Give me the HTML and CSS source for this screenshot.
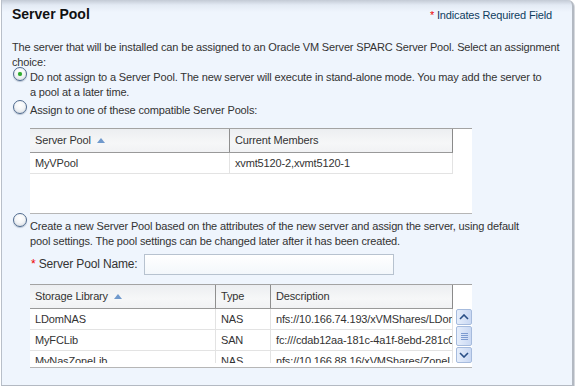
FILE: index.html
```html
<!DOCTYPE html>
<html>

<head>
    <meta name="viewport" content="width=device-width, initial-scale=1.0">
    <title>Server Pool</title>
    <link rel="stylesheet" href="styles.css">
</head>

<body>
    <div class="panel">
        <div class="panel-header">
            <div class="panel-title">Server Pool</div>
            <div class="required-note"><span class="req">*</span> Indicates Required Field</div>
        </div>

        <p class="intro">The server that will be installed can be assigned to an Oracle VM Server SPARC Server Pool. Select an assignment choice:</p>

        <div class="option option-first">
            <span class="radio checked"></span>
            <div class="option-body">Do not assign to a Server Pool. The new server will execute in stand-alone mode. You may add the server to a pool at a later time.</div>
        </div>

        <div class="option option-second">
            <span class="radio"></span>
            <div class="option-body">
                Assign to one of these compatible Server Pools:
                <div class="grid grid-pools">
                    <div class="grid-head">
                        <div class="cell col-pool">Server Pool <span class="sort"></span></div>
                        <div class="cell col-members">Current Members</div>
                    </div>
                    <div class="grid-rows">
                        <div class="grid-row">
                            <div class="cell col-pool">MyVPool</div>
                            <div class="cell col-members">xvmt5120-2,xvmt5120-1</div>
                        </div>
                    </div>
                </div>
            </div>
        </div>

        <div class="option option-third">
            <span class="radio"></span>
            <div class="option-body">
                <div class="option-text">Create a new Server Pool based on the attributes of the new server and assign the server, using default pool settings. The pool settings can be changed later after it has been created.</div>
                <div class="name-row">
                    <label class="name-label"><span class="req">*</span> Server Pool Name:</label>
                    <input type="text" class="name-input">
                </div>
                <div class="grid grid-libs">
                    <div class="grid-head">
                        <div class="cell col-lib">Storage Library <span class="sort"></span></div>
                        <div class="cell col-type">Type</div>
                        <div class="cell col-desc">Description</div>
                    </div>
                    <div class="grid-scroll">
                        <div class="grid-rows">
                            <div class="grid-row">
                                <div class="cell col-lib">LDomNAS</div>
                                <div class="cell col-type">NAS</div>
                                <div class="cell col-desc">nfs://10.166.74.193/xVMShares/LDomNAS</div>
                            </div>
                            <div class="grid-row">
                                <div class="cell col-lib">MyFCLib</div>
                                <div class="cell col-type">SAN</div>
                                <div class="cell col-desc">fc:///cdab12aa-181c-4a1f-8ebd-281c0e2f</div>
                            </div>
                            <div class="grid-row">
                                <div class="cell col-lib">MyNasZoneLib</div>
                                <div class="cell col-type">NAS</div>
                                <div class="cell col-desc">nfs://10.166.88.16/xVMShares/ZoneLib</div>
                            </div>
                        </div>
                        <div class="scrollbar">
                            <div class="sb-btn">
                                <svg width="10" height="6" viewBox="0 0 10 6"><path d="M1 5 L5 1 L9 5" fill="none" stroke="#2a4f86" stroke-width="1.6"/></svg>
                            </div>
                            <div class="sb-thumb">
                                <span></span><span></span><span></span><span></span>
                            </div>
                            <div class="sb-btn">
                                <svg width="10" height="6" viewBox="0 0 10 6"><path d="M1 1 L5 5 L9 1" fill="none" stroke="#2a4f86" stroke-width="1.6"/></svg>
                            </div>
                        </div>
                    </div>
                </div>
            </div>
        </div>
    </div>
</body>

</html>
```

FILE: styles.css
```css
:root {
    --panel-bg: #eff5fd;
    --text-color: #333;
    --grid-line: #a3a3a3;
    --row-line: #e3e3e3;
}

body {
    margin: 0;
    background-color: #fff;
    font-family: "Liberation Sans", Arial, sans-serif;
    font-size: 11px;
    letter-spacing: -0.15px;
    color: var(--text-color);
}

.panel {
    box-sizing: border-box;
    width: 573px;
    height: 386px;
    margin-left: 1px;
    padding: 0 12px 0 10px;
    background: linear-gradient(#c3cad5 0, #e3eaf4 5px, var(--panel-bg) 12px);
    border-left: 1px solid #b8bfc9;
    border-right: 2px solid #b3b9c2;
    border-bottom: 1px solid #b3b9c2;
    border-top-right-radius: 6px;
    box-shadow: 1px 1px 0 #d6d9de;
}

.panel-header {
    display: flex;
    justify-content: space-between;
    align-items: baseline;
    padding-top: 6px;
}

.panel-title {
    font-size: 14px;
    font-weight: bold;
    line-height: 17px;
    letter-spacing: 0;
    color: #111;
}

.required-note {
    font-size: 11px;
    color: #0f3d5f;
    padding-right: 8px;
}

.req {
    color: #e00;
}

.intro {
    margin: 17px 0 0 0;
    line-height: 15px;
}

.option {
    display: flex;
    line-height: 15px;
}

.option-second {
    margin-top: 3px;
}

.option-third {
    margin-top: 5px;
}

.option-body {
    flex: 1;
    padding-right: 14px;
}

.option-text {
    padding-right: 10px;
}

.radio {
    flex: none;
    box-sizing: border-box;
    width: 14px;
    height: 14px;
    margin: -3px 3px 0 1px;
    border: 1px solid #4f6a8e;
    border-radius: 50%;
    background: radial-gradient(circle at 50% 35%, #fff 0, #f4f6f8 45%, #cfd5dc 100%);
    box-shadow: 0 1px 1px rgba(80, 100, 130, 0.35);
    position: relative;
}

.option-third .radio {
    margin-top: -6px;
}

.radio.checked:after {
    content: "";
    position: absolute;
    left: 4px;
    top: 4px;
    width: 4px;
    height: 4px;
    border-radius: 50%;
    background-color: #2faa2f;
    box-shadow: 0 0 1px #6fd06f;
}

.grid {
    width: 442px;
    background-color: #fff;
    border-top: 1px solid var(--grid-line);
    border-bottom: 1px solid #b6b6b6;
    color: #333;
}

.grid-pools {
    margin-top: 10px;
    height: 84px;
}

.grid-head {
    display: flex;
    width: 423px;
    height: 24px;
    box-sizing: border-box;
    background: linear-gradient(#eceef1, #f6f7f8 60%, #f1f2f4);
    border-bottom: 1px solid #999;
    border-right: 1px solid #8a8a8a;
}

.grid-head .cell {
    line-height: 23px;
}

.grid-head .cell + .cell {
    border-left: 1px solid #8f8f8f;
}

.cell {
    box-sizing: border-box;
    padding-left: 5px;
    white-space: nowrap;
    overflow: hidden;
}

.grid-rows {
    width: 423px;
}

.grid-row {
    display: flex;
    height: 21px;
    box-sizing: border-box;
    border-bottom: 1px solid var(--row-line);
    border-right: 1px solid var(--row-line);
}

.grid-row .cell {
    line-height: 20px;
}

.grid-row .cell + .cell {
    border-left: 1px solid var(--row-line);
}

.col-pool {
    width: 199px;
}

.col-members {
    flex: 1;
}

.sort {
    display: inline-block;
    width: 0;
    height: 0;
    margin-left: 3px;
    vertical-align: 1px;
    border-left: 4px solid transparent;
    border-right: 4px solid transparent;
    border-bottom: 5px solid #7099cc;
}

.name-row {
    display: flex;
    align-items: center;
    margin-top: 5px;
}

.name-label {
    width: 113px;
    font-size: 12px;
    padding-left: 1px;
}

.name-input {
    box-sizing: border-box;
    width: 250px;
    height: 21px;
    margin: 0;
    border: 1px solid #b7c2cf;
    background: linear-gradient(#fff, #f3f7fb);
    padding: 0 4px;
    font: inherit;
}

.grid-libs {
    margin-top: 9px;
    height: 84px;
    box-sizing: border-box;
}

.grid-scroll {
    display: flex;
    height: 54px;
    overflow: hidden;
}

.grid-scroll .grid-rows {
    flex: none;
}

.col-lib {
    width: 185px;
}

.col-type {
    width: 55px;
}

.col-desc {
    flex: 1;
}

.scrollbar {
    display: flex;
    flex-direction: column;
    gap: 1px;
    width: 16px;
    margin-left: 3px;
}

.sb-btn,
.sb-thumb {
    box-sizing: border-box;
    display: flex;
    flex-direction: column;
    align-items: center;
    justify-content: center;
    border: 1px solid #a6bbdd;
    border-radius: 2px;
    background: linear-gradient(90deg, #e6eefb, #c9d8f3);
}

.sb-btn {
    height: 16px;
}

.sb-thumb {
    flex: 1;
    gap: 1px;
}

.sb-thumb span {
    display: block;
    width: 7px;
    height: 1px;
    background-color: #7d9bd0;
}
```
